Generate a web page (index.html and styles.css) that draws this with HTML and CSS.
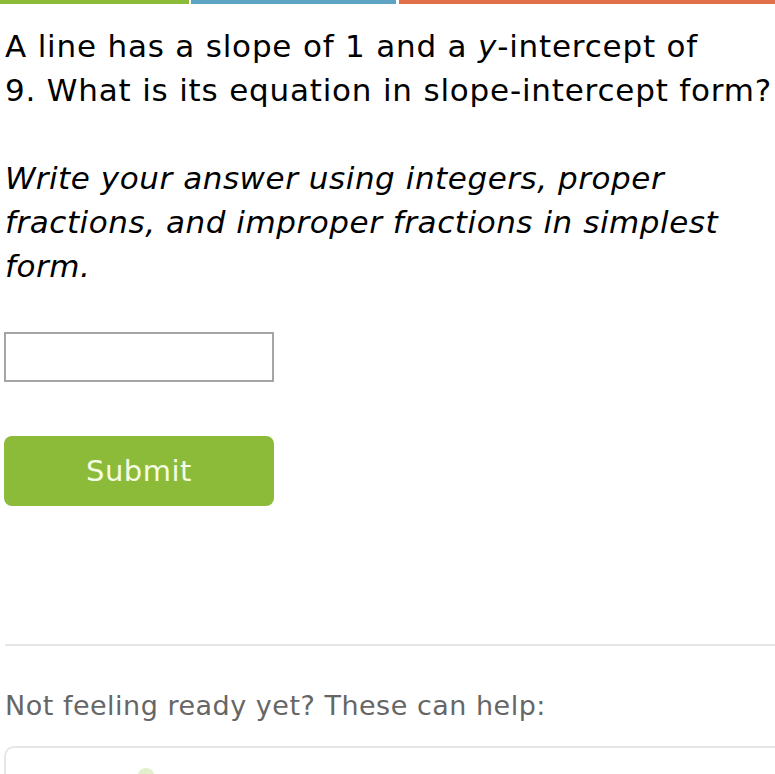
FILE: index.html
```html
<!DOCTYPE html>
<html>
<head>
<meta charset="utf-8">
<link rel="stylesheet" href="styles.css">
</head>
<body>
<div class="topbar"><span class="seg green"></span><span class="seg blue"></span><span class="seg orange"></span></div>
<main class="content">
  <p class="question">A line has a slope of 1 and a <i>y</i>-intercept of<br>9. What is its equation in slope-intercept form?</p>
  <p class="instr">Write your answer using integers, proper<br>fractions, and improper fractions in simplest<br>form.</p>
  <input class="answer" type="text">
  <button class="submit">Submit</button>
  <hr class="divider">
  <p class="help">Not feeling ready yet? These can help:</p>
  <div class="card"><span class="icon"></span></div>
</main>
</body>
</html>
```
FILE: styles.css
```css
html, body { margin: 0; padding: 0; background: #fff; overflow: hidden; }
body { font-family: "DejaVu Sans", Verdana, sans-serif; color: #000; width: 775px; height: 774px; }
.topbar { display: flex; height: 4px; }
.seg { display: block; height: 4px; }
.green { width: 189px; background: #8cbb3a; margin-right: 2px; }
.blue { width: 205px; background: #5fa3c4; margin-right: 3px; }
.orange { flex: 1; background: #e0704a; }
.content { padding: 0 0 0 5px; }
.question { margin: 20px 0 0; font-size: 31px; line-height: 44px; letter-spacing: 0.8px; white-space: nowrap; }
.instr { margin: 44px 0 0; font-size: 31px; line-height: 44px; font-style: italic; letter-spacing: 0.55px; white-space: nowrap; }
.answer { display: block; margin: 44px 0 0 -1px; width: 270px; height: 50px; box-sizing: border-box; border: 2px solid #a5a5a5; background: #fff; padding: 0; }
.submit { display: block; margin: 54px 0 0 -1px; width: 270px; height: 70px; border: none; border-radius: 8px; background: #8cbb3a; color: #f6fbe3; font-family: "DejaVu Sans", Verdana, sans-serif; font-size: 29px; letter-spacing: 0.5px; padding: 0; }
.divider { margin: 138px 0 0; border: none; border-top: 2px solid #e6e6e6; height: 0; }
.help { margin: 42px 0 0; font-size: 27px; line-height: 36px; letter-spacing: 0.5px; color: #666; }
.card { margin: 22px 0 0 -1px; height: 60px; width: 800px; border: 2px solid #e6e6e6; border-radius: 10px; position: relative; }
.icon { position: absolute; left: 132px; top: 20px; width: 16px; height: 14px; border-radius: 50%; background: #e3efcc; }
```
